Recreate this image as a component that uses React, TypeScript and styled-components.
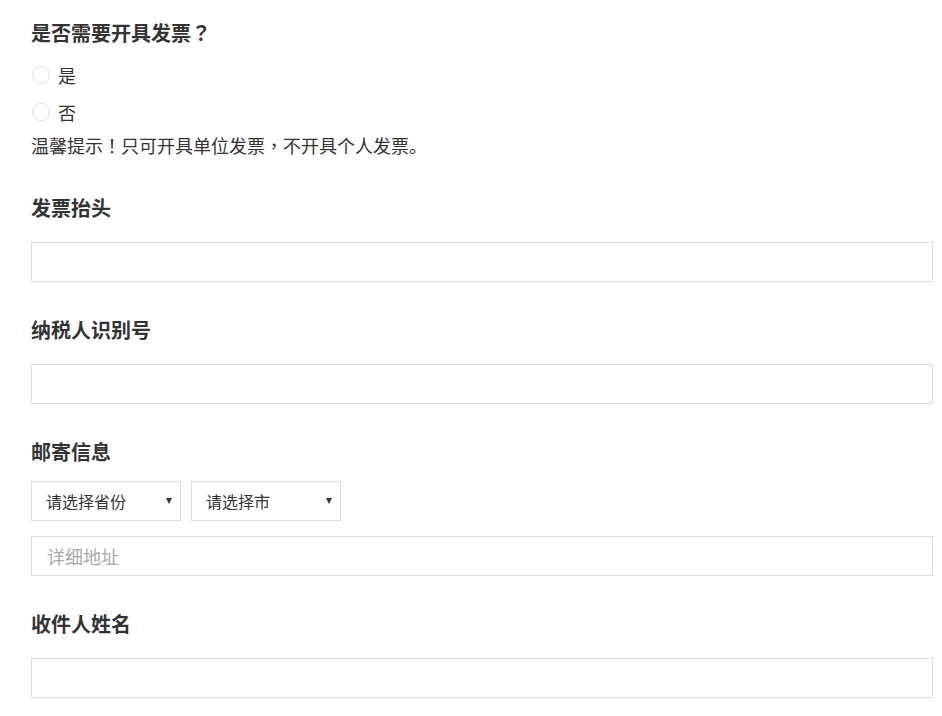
import React from "react";
import styled, { createGlobalStyle } from "styled-components";

const GlobalStyle = createGlobalStyle`
  html, body { margin: 0; padding: 0; background: #fff; }
  body {
    font-family: "Noto Sans CJK SC", "Noto Sans", "Liberation Sans", sans-serif;
    color: #333;
  }
  * { box-sizing: border-box; }
`;

const Page = styled.form`
  display: flex;
  flex-direction: column;
  padding: 19px 9px 20px 31px;
`;

const Group = styled.section<{ $gap?: number }>`
  display: flex;
  flex-direction: column;
  margin-bottom: 34px;
  & > h2 { margin-bottom: ${(p) => p.$gap ?? 20}px; }
`;

const Heading = styled.h2`
  margin: 0;
  font-size: 20px;
  line-height: 28px;
  font-weight: 700;
  color: #333;
`;

const Punct = styled.span`
  font-family: "Noto Sans CJK TC", "Noto Sans CJK SC", sans-serif;
`;

const RadioList = styled.div`
  display: flex;
  flex-direction: column;
`;

const RadioRow = styled.label`
  display: flex;
  align-items: center;
  gap: 8px;
  height: 37px;
  padding-left: 1px;
  font-size: 18px;
  color: #333;
  cursor: pointer;
`;

const Radio = styled.input`
  appearance: none;
  margin: 0;
  width: 18px;
  height: 18px;
  border: 1px solid #ddd;
  border-radius: 50%;
  background: #fff;
`;

const Tip = styled.p`
  margin: 0;
  font-size: 18px;
  line-height: 30px;
  color: #333;
`;

const TextInput = styled.input`
  display: block;
  width: 100%;
  height: 40px;
  border: 1px solid #ddd;
  border-radius: 0;
  padding: 0 15px;
  font-family: inherit;
  font-size: 18px;
  color: #333;
  outline: none;
  &::placeholder { color: #a9a9a9; }
`;

const SelectRow = styled.div`
  display: flex;
  gap: 10px;
  margin-bottom: 15px;
`;

const SelectWrap = styled.div`
  position: relative;
  width: 150px;
  height: 40px;
  &::after {
    content: "";
    position: absolute;
    right: 9px;
    top: 17px;
    border-left: 3.5px solid transparent;
    border-right: 3.5px solid transparent;
    border-top: 6px solid #333;
    pointer-events: none;
  }
`;

const Select = styled.select`
  appearance: none;
  width: 100%;
  height: 100%;
  border: 1px solid #ddd;
  border-radius: 0;
  background: #fff;
  padding: 0 24px 0 14px;
  font-family: inherit;
  font-size: 16px;
  color: #333;
  outline: none;
`;

export default function App() {
  return (
    <>
      <GlobalStyle />
      <Page>
        <Group $gap={9}>
          <Heading>
            是否需要开具发票<Punct>？</Punct>
          </Heading>
          <RadioList>
            <RadioRow>
              <Radio type="radio" name="invoice" value="yes" />
              是
            </RadioRow>
            <RadioRow>
              <Radio type="radio" name="invoice" value="no" />
              否
            </RadioRow>
          </RadioList>
          <Tip>
            温馨提示<Punct>！</Punct>只可开具单位发票<Punct>，</Punct>不开具个人发票。
          </Tip>
        </Group>

        <Group>
          <Heading>发票抬头</Heading>
          <TextInput type="text" />
        </Group>

        <Group>
          <Heading>纳税人识别号</Heading>
          <TextInput type="text" />
        </Group>

        <Group $gap={15}>
          <Heading>邮寄信息</Heading>
          <SelectRow>
            <SelectWrap>
              <Select defaultValue="">
                <option value="">请选择省份</option>
              </Select>
            </SelectWrap>
            <SelectWrap>
              <Select defaultValue="">
                <option value="">请选择市</option>
              </Select>
            </SelectWrap>
          </SelectRow>
          <TextInput type="text" placeholder="详细地址" />
        </Group>

        <Group>
          <Heading>收件人姓名</Heading>
          <TextInput type="text" />
        </Group>
      </Page>
    </>
  );
}
